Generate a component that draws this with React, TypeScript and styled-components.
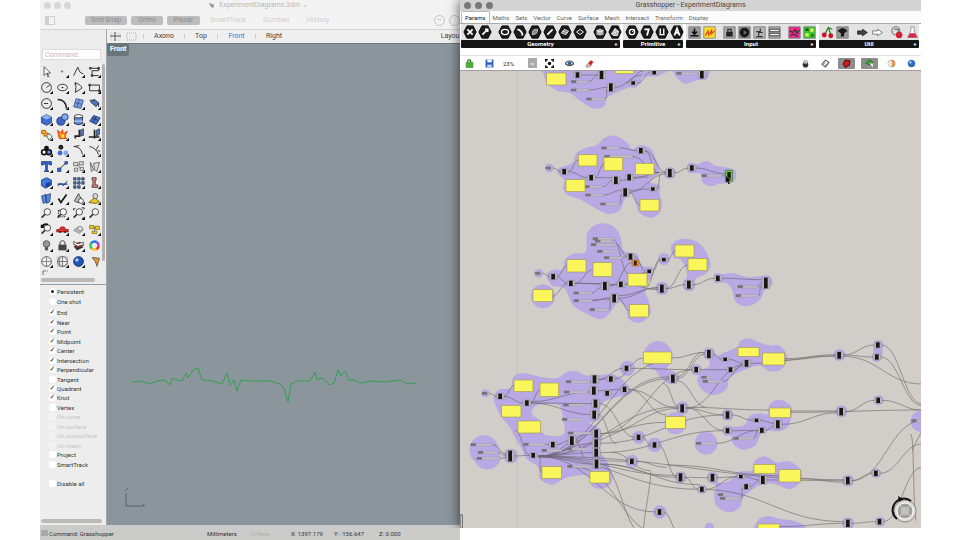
import React from "react";
import styled, { createGlobalStyle, css } from "styled-components";

const GlobalStyle = createGlobalStyle`
  *, *::before, *::after { box-sizing: border-box; }
  body { margin: 0; background: #fff; font-family: Roboto, "Liberation Sans", sans-serif; font-size: 7px; line-height: 9px; color: #333; }
  button, input, select { font: inherit; color: inherit; margin: 0; padding: 0; border: 0; background: none; }
  svg { display: block; }
`;

/* ---------- shell ---------- */

const Desktop = styled.main`
  display: grid;
  grid-template-columns: minmax(0, 420fr) minmax(0, 461fr);
  height: 100vh;
  padding: 0 39px 0 40px;
  overflow: hidden;
`;

const RhinoWindow = styled.section`
  display: flex;
  flex-direction: column;
  min-width: 0;
  min-height: 0;
  background: #f3f3f3;
`;

const GrasshopperWindow = styled.section`
  display: flex;
  flex-direction: column;
  min-width: 0;
  min-height: 0;
  margin-bottom: 12px;
  z-index: 1;
  background: #fff;
  box-shadow: -2px 0 10px rgba(0, 0, 0, 0.5);
  clip-path: inset(0 0 0 -20px);
`;

const TitleBar = styled.header<{ $active?: boolean }>`
  display: grid;
  grid-template-columns: ${(p) => (p.$active ? 40 : 56)}px 1fr 40px;
  align-items: center;
  height: 11px;
  flex: none;
  background: ${(p) => (p.$active ? "#d3d3d3" : "#f3f3f3")};
  color: ${(p) => (p.$active ? "#444" : "#b8b8b8")};
`;

const Lights = styled.div<{ $active?: boolean }>`
  display: flex;
  gap: ${(p) => (p.$active ? 4 : 3)}px;
  padding-left: 4px;
  i {
    width: 7px;
    height: 7px;
    border-radius: 50%;
    background: ${(p) => (p.$active ? "#777" : "#d6d6d6")};
  }
`;

const WindowTitle = styled.h1`
  display: flex;
  justify-content: center;
  align-items: center;
  gap: 4px;
  margin: 0;
  font-size: 7px;
  line-height: 9px;
  font-weight: 400;
  white-space: nowrap;
`;

/* ---------- modelling window ---------- */

const SnapBar = styled.div`
  display: flex;
  align-items: center;
  gap: 4px;
  height: 18px;
  flex: none;
  padding-left: 5px;
  overflow: hidden;
`;

const PanelToggle = styled.button`
  width: 10px;
  height: 9px;
  margin-right: 26px;
  border: 1px solid #d0d0d0;
  border-left-width: 4px;
`;

const SnapButton = styled.button<{ $on?: boolean; $width: number }>`
  width: ${(p) => p.$width}px;
  height: 9px;
  flex: none;
  border-radius: 2px;
  background: ${(p) => (p.$on ? "#bdbdbd" : "transparent")};
  color: ${(p) => (p.$on ? "#8c8c8c" : "#cfcfcf")};
`;

const RoundButton = styled.button`
  width: 11px;
  height: 11px;
  flex: none;
  border: 1px solid #c4c4c4;
  border-radius: 50%;
  color: #aaa;
  line-height: 7px;
`;

const Spacer = styled.span`
  flex: 1;
`;

const WorkArea = styled.div`
  display: grid;
  grid-template-columns: 67px minmax(0, 1fr);
  flex: 1;
  min-height: 0;
`;

const Sidebar = styled.aside`
  display: flex;
  flex-direction: column;
  min-height: 0;
  background: #ececec;
  border-right: 1px solid #a4a4a4;
  border-top: 1px solid #d4d4d4;
`;

const CommandInput = styled.input`
  height: 11px;
  flex: none;
  margin: 19px 5px 0 2px;
  padding: 0 2px;
  border: 1px solid #dcdcdc;
  background: #fff;
  &::placeholder { color: #bbb; opacity: 1; }
`;

const ToolArea = styled.div`
  display: grid;
  grid-template-columns: 1fr 4px;
  height: 205px;
  flex: none;
  margin-top: 4px;
`;

const ToolGrid = styled.div`
  display: grid;
  grid-template-columns: repeat(4, 1fr);
  grid-template-rows: repeat(13, 1fr);
  margin-left: -2px;
`;

const ToolButton = styled.button`
  display: grid;
  place-items: center;
`;

const VerticalThumb = styled.div`
  width: 3px;
  margin-bottom: 8px;
  border-radius: 2px;
  background: #b4b4b4;
`;

const HorizontalThumb = styled.div<{ $inset: number }>`
  height: 4px;
  flex: none;
  margin: 0 ${(p) => p.$inset}px 2px 1px;
  border-radius: 2px;
  background: #bcb8b6;
`;

const PanelFoot = styled.div`
  height: 9px;
  flex: none;
  padding-left: 2px;
  color: #777;
`;

const Options = styled.form`
  display: flex;
  flex-direction: column;
  flex: 1;
  min-height: 0;
  padding-top: 2px;
  border-top: 1px solid #8d9da8;
  background: #ededed;
  font-size: 6px;
`;

const OptionGroup = styled.div<{ $height: number; $gap: number }>`
  display: grid;
  grid-auto-rows: 1fr;
  flex: none;
  height: ${(p) => p.$height}px;
  margin-bottom: ${(p) => p.$gap}px;
  padding-left: 9px;
`;

const Option = styled.label<{ $off?: boolean }>`
  display: flex;
  align-items: center;
  gap: 1px;
  color: ${(p) => (p.$off ? "#c4c4c4" : "#333")};
  white-space: nowrap;
  input {
    display: grid;
    place-items: center;
    appearance: none;
    flex: none;
    width: 7px;
    height: 7px;
    border-radius: 2px;
    background: ${(p) => (p.$off ? "#f2f2f2" : "#fff")};
  }
  input[type="radio"] { border-radius: 50%; }
  input[type="radio"]:checked::after { content: ""; width: 3px; height: 3px; border-radius: 50%; background: #222; }
  input[type="checkbox"]:checked::after { content: "✓"; font: 700 7px/7px "DejaVu Sans", sans-serif; color: #222; }
`;

const ViewColumn = styled.div`
  display: flex;
  flex-direction: column;
  min-width: 0;
`;

const ViewTabs = styled.nav`
  display: flex;
  align-items: center;
  height: 14px;
  flex: none;
  padding-left: 3px;
  overflow: hidden;
  background: #efefef;
  border-top: 1px solid #d4d4d4;
`;

const ViewTab = styled.button<{ $width: number; $active?: boolean }>`
  width: ${(p) => p.$width}px;
  flex: none;
  color: ${(p) => (p.$active ? "#2c7be0" : "#444")};
  white-space: nowrap;
`;

const TabRule = styled.i`
  width: 1px;
  height: 5px;
  background: #ccc;
`;

const Viewport = styled.div`
  position: relative;
  flex: 1;
  min-height: 0;
  overflow: hidden;
  background: #8b969c;
  border-top: 1px solid #6d7a7a;
`;

const ViewLabel = styled.span`
  position: absolute;
  left: 0;
  top: 0;
  padding: 1px 3px 2px;
  border-radius: 0 0 3px 0;
  background: #6a7579;
  color: #fff;
  font-weight: 700;
`;

const StatusBar = styled.footer`
  display: flex;
  align-items: center;
  height: 15px;
  flex: none;
  padding: 1px 0 0 1px;
  background: #cbcbc9;
  font-size: 6px;
  white-space: nowrap;
  overflow: hidden;
`;

const StatusMark = styled.i`
  width: 7px;
  height: 6px;
  margin-right: 1px;
  background: #aaa;
`;

const StatusItem = styled.span<{ $width: number; $dim?: boolean }>`
  width: ${(p) => p.$width}px;
  flex: none;
  color: ${(p) => (p.$dim ? "#b0b0b0" : "#333")};
`;

type Drawing = React.ReactNode;
const line = { fill: "none", stroke: "#333", strokeWidth: 1.2 };
const lens = (
  <>
    <circle cx="9" cy="6" r="4" fill="#f4f4f4" stroke="#333" />
    <path d="M6 9 2 13" stroke="#333" strokeWidth="2" />
  </>
);
const cube = (
  <>
    <path d="M2 5 8 2l6 3v7l-6 3-6-3z" fill="#3c6fd6" stroke="#1c356e" />
    <path d="M2 5 8 2l6 3-6 3z" fill="#8db4f4" />
  </>
);

const tools: [string, Drawing][] = [
  ["Select", <path d="M5 2v11l3-3 2 5 1-1-2-4h4z" fill="#fff" stroke="#444" />],
  ["Point", <path d="M6 8h3M7.500 6.500v3" {...line} stroke="#777" />],
  ["Polyline", <path d="M2 13 7 3l3 6 4 2M7 3l1 0" {...line} />],
  ["Control curve", <path d="M3 4h10v3H5v6h8M2 3h2v2H2zM12 3h2v2h-2zM4 12h2v2H4z" {...line} />],
  ["Circle", <><circle cx="8" cy="8" r="6" {...line} /><path d="M8 8l4-3" {...line} /></>],
  ["Ellipse", <><ellipse cx="8" cy="8" rx="6" ry="4" {...line} /><circle cx="8" cy="8" r="1" /></>],
  ["Arc", <path d="M4 2q9 4 8 7L4 14l1-6zM4 2v3" {...line} />],
  ["Rectangle", <path d="M2 5h12v7H2zM1 4h2v2H1zM13 11h2v2h-2z" {...line} />],
  ["Polygon", <><circle cx="8" cy="8" r="6" {...line} /><path d="M5 8h5" {...line} /></>],
  ["Fillet", <path d="M2 3q10 0 11 11" fill="none" stroke="#222" strokeWidth="2" />],
  ["Surface", <path d="M5 2 14 4 11 14 2 12zM4 7l8 2M9 3 6 13" fill="#7e9ee0" stroke="#354d91" />],
  ["Sweep", <><path d="M3 6 8 3l5 4-3 5z" fill="#4c73ca" stroke="#333" /><path d="M2 4h6M13 7v5" {...line} /></>],
  ["Box", cube],
  ["Sphere", <><circle cx="6" cy="10" r="5" fill="#3a66c8" stroke="#1c356e" /><circle cx="11" cy="5" r="4" fill="#86aaf0" stroke="#1c356e" /></>],
  ["Loft", <><path d="M3 4v9q5 3 10 0V4z" fill="#5a8ae2" stroke="#222" /><ellipse cx="8" cy="4" rx="5" ry="2" fill="#fff" stroke="#222" /><path d="M1 10h14" stroke="#eee" /></>],
  ["Patch", <path d="M2 10 7 3l8 3-5 8zM5 6l7 3M10 4 6 12" fill="#426ec8" stroke="#23315e" />],
  ["Join", <><path d="M2 3h5v3h3v4H5V7H2z" fill="#f9a62e" stroke="#a85d00" /><path d="m8 9 4-2 3 4-4 4z" fill="#eee" stroke="#555" /></>],
  ["Explode", <><path d="m2 3 4 3 2-4 1 5 5-3-3 6 2 3H4z" fill="#ff8a16" stroke="#d22c00" /><path d="M7 8h3v4H7z" fill="#ffe64c" /></>],
  ["Trim", <><path d="M9 2v8H4v3" fill="none" stroke="#222" strokeWidth="2" /><path d="m10 3 4-2v8l-4 1z" fill="#567ac0" stroke="#333" /></>],
  ["Split", <><path d="M1 11h13M8 2v11" fill="none" stroke="#222" strokeWidth="2" /><path d="m10 3 4-2v7l-4 2z" fill="#567ac0" stroke="#333" /></>],
  ["Group", <><circle cx="8" cy="5" r="3" fill="#111" /><circle cx="5" cy="10" r="3" fill="#fff" stroke="#111" strokeWidth="2" /><circle cx="11" cy="10" r="3" fill="#6b94e8" stroke="#111" strokeWidth="2" /></>],
  ["Ungroup", <><circle cx="6" cy="4" r="3" fill="#222" /><circle cx="5" cy="11" r="3" fill="#3f6cd1" /><circle cx="12" cy="11" r="3" fill="#84a7ef" /></>],
  ["Edit points", <path d="M2 3q9 0 11 10M3 3l6-1" {...line} />],
  ["Rebuild", <path d="M2 3q8 2 11 10M13 2l-3 5M12 8l3 1" {...line} />],
  ["Text", <path d="M2 2h12v4h-2l-1-1H9v8l2 1H5l2-1V5H5L4 6H2z" fill="#3569d8" stroke="#14306f" />],
  ["Move", <><path d="M4 11 12 4" {...line} /><path d="M2 10h4v4H2zM11 2h3v3h-3z" fill="#3e6fd9" stroke="#1c356e" /></>],
  ["Array", <path d="M2 3h5v4H2zM9 2h5v4H9zM3 10h4v4H3zM10 9h4v4h-4zM7 5l3 5" fill="#ddd" stroke="#666" />],
  ["Scale", <path d="m3 3 4 9-3 2zM7 4l7-1-3 11-3-2z" fill="#ddd" stroke="#555" />],
  ["Solid edit", <><path d="M2 5 8 2l6 3v6l-7 4-5-3z" fill="#3f78e0" stroke="#1c356e" /><path d="M7 9 13 7v4l-6 3z" fill="#1c3f90" /></>],
  ["Dimension", <><path d="M2 10h12" stroke="#3565c0" strokeWidth="2" /><path d="m2 12 4-3 3 3 5-6" {...line} /></>],
  ["Grid array", <path d="M2 2h3v3H2zM7 2h3v3H7zM12 2h3v3h-3zM2 7h3v3H2zM7 7h3v3H7zM12 7h3v3h-3zM2 12h3v3H2zM7 12h3v3H7z" fill="#5471af" stroke="#34425f" />],
  ["Align", <path d="M5 2h5v3H9v6h3v3H5v-3h1V5H5z" fill="#cf8080" stroke="#603838" />],
  ["Copy", <path d="m2 5 5-2 1 9-4 2zM7 4l6-2-1 10-4 2z" fill="#5b88df" stroke="#263e7d" />],
  ["Check", <path d="m3 8 3 5 7-10" fill="none" stroke="#111" strokeWidth="2" />],
  ["Boolean", <><path d="M3 11 8 2l5 9q-5 4-10 0z" fill="#bbb" stroke="#333" /><circle cx="11" cy="11" r="3" fill="#fff" stroke="#333" /></>],
  ["Analyze", <><path d="m1 13 7-6 6 5-4 2z" fill="#f0c52c" stroke="#6a5600" /><circle cx="9" cy="5" r="3" fill="#ddd" stroke="#555" /></>],
  ["Zoom dynamic", lens],
  ["Zoom window", <><path d="M3 4h8v8H3z" {...line} strokeDasharray="2 1" />{lens}</>],
  ["Zoom extents", <>{lens}<path d="M2 4V2h2M12 1h3v2M15 12v2h-3" {...line} /></>],
  ["Zoom selected", lens],
  ["Undo view", <>{lens}<path d="M2 5q3-5 8-3M2 2v3h3" stroke="#111" fill="none" strokeWidth="2" /></>],
  ["Car", <><path d="M1 8h3l2-3h4l2 3h3v3H1z" fill="#df2d2d" stroke="#8c1111" /><path d="M4 11h2M10 11h2" stroke="#111" strokeWidth="2" /></>],
  ["Display", <><path d="m2 9 5-4 7 3-5 5z" fill="#bbb" stroke="#888" /><circle cx="10" cy="7" r="3" fill="#ddd" stroke="#777" /></>],
  ["Lights", <><path d="M2 3h5v4H2zM9 4h5v4H9zM5 10h6v3H5z" fill="#f1c624" stroke="#98780e" /><path d="M7 5h3M8 5v6" stroke="#777" /></>],
  ["Lamp", <><circle cx="8" cy="6" r="4" fill="#999" stroke="#444" /><path d="M6 10h4v4H6z" fill="#555" /></>],
  ["Lock", <><path d="M5 8V4q3-4 6 0v4" {...line} /><path d="M3 7h10v7H3z" fill="#444" /></>],
  ["Layers", <><path d="m2 9 4 5 8-4-3-3z" fill="#333" /><path d="m2 6 4 4 8-2-4-4z" fill="#ef6c2c" stroke="#971e11" /><path d="m2 3 5 3 7-2v3L7 9 2 6z" fill="#fff" stroke="#444" /></>],
  ["Colors", <><circle cx="8" cy="8" r="5" fill="none" stroke="#e33" strokeWidth="3" strokeDasharray="6 26" /><circle cx="8" cy="8" r="5" fill="none" stroke="#a3e" strokeWidth="3" strokeDasharray="5 27" strokeDashoffset="-26" /><circle cx="8" cy="8" r="5" fill="none" stroke="#27e" strokeWidth="3" strokeDasharray="8 24" strokeDashoffset="-18" /><circle cx="8" cy="8" r="5" fill="none" stroke="#2c5" strokeWidth="3" strokeDasharray="7 25" strokeDashoffset="-11" /><circle cx="8" cy="8" r="5" fill="none" stroke="#fb2" strokeWidth="3" strokeDasharray="6 26" strokeDashoffset="-5" /></>],
  ["Wireframe", <><circle cx="8" cy="8" r="6" fill="#eee" stroke="#444" /><path d="M2 8h12M8 2v12" stroke="#777" /></>],
  ["Shaded", <><path d="M1 1h14v14H1z" fill="#d0d0d0" /><circle cx="8" cy="8" r="6" fill="#eee" stroke="#444" /><path d="M2 8h12M8 2v12M5 3q-2 5 0 10" stroke="#666" fill="none" /></>],
  ["Rendered", <><circle cx="8" cy="8" r="6" fill="#2055b8" stroke="#0a1d51" /><circle cx="6" cy="6" r="2" fill="#b5d0ff" /></>],
  ["Material", <path d="m5 3 9 1-3 10-2-6z" fill="#e89a2c" stroke="#4d4d4d" />],
];

const noArrow = new Set(["Select", "Colors", "Zoom dynamic", "Zoom selected", "Material"]);

const ToolIcon = ({ name, children }: { name: string; children: Drawing }) => (
  <svg width="13" height="13" viewBox="0 0 16 16" aria-hidden="true">
    {children}
    {!noArrow.has(name) && <path d="M16 12v4h-4z" fill="#111" />}
  </svg>
);

const snaps: [string, "on" | "open" | "off"][] = [
  ["End", "on"], ["Near", "on"], ["Point", "on"], ["Midpoint", "on"], ["Center", "on"],
  ["Intersection", "on"], ["Perpendicular", "on"], ["Tangent", "open"], ["Quadrant", "on"],
  ["Knot", "on"], ["Vertex", "open"], ["On curve", "off"], ["On surface", "off"],
  ["On polysurface", "off"], ["On mesh", "off"], ["Project", "open"], ["SmartTrack", "open"],
];

const curvePoints =
  "25,338 33,337 43,340 50,337 58,336 63,341 65,334 70,336 75,337 79,329 81,334 86,326 91,324 95,336 105,337 115,340 120,329 123,342 127,336 130,347 134,336 145,337 155,337 163,337 173,340 177,344 181,358 184,340 190,337 203,337 208,328 210,336 215,334 223,341 227,339 231,326 234,332 238,327 242,336 247,336 253,339 265,337 278,338 286,337 293,336 300,340 309,339";

const Rhino = () => (
  <RhinoWindow>
    <TitleBar>
      <Lights><i /><i /><i /></Lights>
      <WindowTitle>
        <svg width="7" height="7" viewBox="0 0 8 8"><path d="M1 1l3 1 3 1-1 4-3-2z" fill="#999" /></svg>
        ExperimentDiagrams.3dm ⌄
      </WindowTitle>
    </TitleBar>
    <SnapBar>
      <PanelToggle aria-label="Toggle panel" />
      <SnapButton $on $width={42}>Grid Snap</SnapButton>
      <SnapButton $on $width={32}>Ortho</SnapButton>
      <SnapButton $on $width={33}>Planar</SnapButton>
      <SnapButton $width={48}>SmartTrack</SnapButton>
      <SnapButton $width={40}>Gumball</SnapButton>
      <SnapButton $width={36}>History</SnapButton>
      <Spacer />
      <RoundButton aria-label="Remove">–</RoundButton>
      <RoundButton aria-label="Settings" />
    </SnapBar>
    <WorkArea>
      <Sidebar>
        <CommandInput aria-label="Command" placeholder="Command:" />
        <ToolArea>
          <ToolGrid>
            {tools.map(([name, art]) => (
              <ToolButton key={name} aria-label={name}><ToolIcon name={name}>{art}</ToolIcon></ToolButton>
            ))}
          </ToolGrid>
          <VerticalThumb />
        </ToolArea>
        <PanelFoot>
          <svg width="8" height="8" viewBox="0 0 8 8"><path d="M1 6V2h3M5 2h1" fill="none" stroke="#777" /></svg>
        </PanelFoot>
        <HorizontalThumb $inset={11} />
        <Options>
          <OptionGroup role="radiogroup" aria-label="Snap duration" $height={19} $gap={2}>
            <Option><input type="radio" name="mode" defaultChecked />Persistent</Option>
            <Option><input type="radio" name="mode" />One shot</Option>
          </OptionGroup>
          <OptionGroup role="group" aria-label="Object snaps" $height={161} $gap={9}>
            {snaps.map(([name, state]) => (
              <Option key={name} $off={state === "off"}>
                <input type="checkbox" defaultChecked={state === "on"} disabled={state === "off"} />
                {name}
              </Option>
            ))}
          </OptionGroup>
          <OptionGroup $height={10} $gap={0}>
            <Option><input type="checkbox" />Disable all</Option>
          </OptionGroup>
          <Spacer />
          <HorizontalThumb $inset={4} />
        </Options>
      </Sidebar>
      <ViewColumn>
        <ViewTabs>
          <ViewTab $width={14} aria-label="Four views">
            <svg width="11" height="9" viewBox="0 0 11 9"><path d="M1 1h9v7H1z" fill="none" stroke="#ccc" strokeDasharray="2 1" /><path d="M5 0v9M0 4h11" stroke="#555" /></svg>
          </ViewTab>
          <ViewTab $width={19} aria-label="Single view">
            <svg width="14" height="9" viewBox="0 0 14 9"><path d="M3 1h9v7H3z" fill="none" stroke="#8fb5ea" strokeDasharray="1 1" /></svg>
          </ViewTab>
          <TabRule />
          <ViewTab $width={40}>Axono</ViewTab><TabRule />
          <ViewTab $width={32}>Top</ViewTab><TabRule />
          <ViewTab $width={37} $active>Front</ViewTab><TabRule />
          <ViewTab $width={36}>Right</ViewTab>
          <Spacer />
          <ViewTab $width={20}>Layou</ViewTab>
        </ViewTabs>
        <Viewport>
          <ViewLabel>Front</ViewLabel>
          <svg width="100%" height="100%">
            <polyline points={curvePoints} fill="none" stroke="#329f50" />
            <path d="M19 462h18M19 462v-13M18 447l3-3M36 460l2 2" fill="none" stroke="#555f76" />
          </svg>
        </Viewport>
      </ViewColumn>
    </WorkArea>
    <StatusBar>
      <StatusMark />
      <StatusItem $width={158}>Command: Grasshopper</StatusItem>
      <StatusItem $width={43}>Millimeters</StatusItem>
      <StatusItem $width={41} $dim>CPlane</StatusItem>
      <StatusItem $width={43}>X: 1397.179</StatusItem>
      <StatusItem $width={45}>Y: -156.647</StatusItem>
      <StatusItem $width={40}>Z: 0.000</StatusItem>
    </StatusBar>
  </RhinoWindow>
);

/* ---------- graph editor window ---------- */

const Menu = styled.nav`
  display: flex;
  align-items: center;
  height: 12px;
  flex: none;
  padding-left: 1px;
  background: #fbfbfb;
  font-size: 6px;
`;

const MenuTab = styled.button<{ $active?: boolean }>`
  height: 12px;
  padding: 0 3px;
  color: #666;
  ${(p) =>
    p.$active &&
    css`
      border: 1px solid #bbb;
      border-bottom: 0;
      border-radius: 2px 2px 0 0;
      background: #fff;
      color: #111;
    `}
`;

const Ribbon = styled.div`
  display: flex;
  gap: 3px;
  height: 25px;
  flex: none;
  padding: 0 2px 0 1px;
  border-top: 1px solid #aaa;
  background: #fff;
`;

const RibbonGroup = styled.section<{ $grow: number }>`
  display: flex;
  flex-direction: column;
  flex: ${(p) => p.$grow} 1 0;
  min-width: 0;
  background: #e3e3e3;
`;

const RibbonIcons = styled.div`
  display: flex;
  align-items: center;
  flex: 1;
  padding-left: 1px;
`;

const RibbonButton = styled.button<{ $apart?: boolean }>`
  display: grid;
  place-items: center;
  width: 15px;
  height: 15px;
  flex: none;
  margin-left: ${(p) => (p.$apart ? 5 : 0)}px;
`;

const RibbonTitle = styled.h2`
  display: grid;
  grid-template-columns: 8px 1fr 8px;
  height: 8px;
  margin: 0;
  border-radius: 1px;
  background: #151515;
  color: #fff;
  font-size: 6px;
  line-height: 8px;
  font-weight: 700;
  text-align: center;
`;

const CanvasBar = styled.div`
  display: flex;
  align-items: center;
  gap: 8px;
  height: 15px;
  flex: none;
  margin-top: 7px;
  padding: 0 4px 0 3px;
  border-top: 1px solid #e2e2e2;
  background: #fff;
`;

const BarButton = styled.button<{ $pressed?: boolean }>`
  display: grid;
  place-items: center;
  width: 12px;
  height: 11px;
  flex: none;
  border-radius: 1px;
  ${(p) =>
    p.$pressed &&
    css`
      width: 17px;
      margin: 0 -1px;
      background: #8d8d8d;
    `}
`;

const ZoomField = styled.label`
  position: relative;
  display: flex;
  margin-right: -2px;
  svg { position: absolute; right: 2px; top: 4px; pointer-events: none; }
`;

const ZoomSelect = styled.select`
  width: 34px;
  height: 11px;
  appearance: none;
  background: linear-gradient(#aaa, #aaa) right / 9px 10px no-repeat;
  font-size: 6px;
`;

const Canvas = styled.div`
  position: relative;
  flex: 1;
  min-height: 0;
  overflow: hidden;
  background: #d1cdc8;
  border-top: 1px solid #a39f9d;
`;

const Compass = styled.svg`
  position: absolute;
  right: 3px;
  bottom: 2px;
`;

const hexGlyphs: Record<string, Drawing> = {
  point: <path d="m5 5 6 6M11 5l-6 6" stroke="#fff" strokeWidth="2" />,
  vector: <path d="m5 11 5-5M8 5h3v3" stroke="#fff" fill="none" strokeWidth="2" />,
  circle: <ellipse cx="8" cy="8" rx="4" ry="3" fill="none" stroke="#fff" strokeWidth="1.500" />,
  arc: <path d="M5 5q5 1 6 7" fill="none" stroke="#fff" strokeWidth="2" />,
  curve: <path d="M5 11Q4 4 11 5q0 6-6 6z" fill="#888" stroke="#ccc" />,
  line: <path d="m5 11 6-6" stroke="#fff" strokeWidth="2" />,
  plane: <path d="m4 9 3-4 5 2-3 4zM6 7l4 2" fill="#777" stroke="#fff" />,
  rect: <path d="m4 8 4-3 4 3-4 3z" fill="#333" stroke="#fff" />,
  box: <><path d="m4 6 4-2 4 2v5l-4 1-4-1z" fill="#bbb" /><path d="m4 6 4 2 4-2" stroke="#fff" fill="none" /></>,
  mesh: <path d="M4 10 8 4l4 3-1 5H6zM8 4v8M4 10l8-3" fill="#aaa" stroke="#eee" />,
  bool: <><circle cx="8" cy="8" r="3" fill="none" stroke="#fff" strokeWidth="1.500" /><path d="m8 8 3-3" stroke="#fff" /></>,
  integer: <path d="M5 5h5l-2 7" fill="none" stroke="#fff" strokeWidth="2" />,
  number: <path d="M6 4v7M10 4v7M5 11h6" fill="none" stroke="#fff" strokeWidth="1.500" />,
  string: <path d="m5 12 3-8 3 8M6 9h4" fill="none" stroke="#fff" strokeWidth="2" />,
};

const Hex = ({ glyph }: { glyph: string }) => (
  <svg width="14" height="14" viewBox="0 0 16 16">
    <path d="M4.500 1h7L15 8l-3.500 7h-7L1 8z" fill="#1b1b1b" stroke="#000" strokeLinejoin="round" />
    {hexGlyphs[glyph]}
  </svg>
);

const Tile = ({ fill, children }: { fill: string; children: Drawing }) => (
  <svg width="13" height="13" viewBox="0 0 16 16">
    <path d="M1 1h14v14H1z" fill={fill} stroke="#777" />
    {children}
  </svg>
);

const Glyph = ({ children, size = 13 }: { children: Drawing; size?: number }) => (
  <svg width={size} height={size} viewBox="0 0 16 16">{children}</svg>
);

type Item = { name: string; art: Drawing; apart?: boolean };
const hex = (name: string, apart = false): Item => ({ name, apart, art: <Hex glyph={name} /> });

const ribbon: { title: string; grow: number; items: Item[] }[] = [
  { title: "Geometry", grow: 159, items: [hex("point"), hex("vector"), hex("circle", true), hex("arc"), hex("curve"), hex("line"), hex("plane"), hex("rect"), hex("box", true), hex("mesh")] },
  { title: "Primitive", grow: 60, items: [hex("bool"), hex("integer"), hex("number"), hex("string")] },
  {
    title: "Input", grow: 130, items: [
      { name: "Slider", art: <Tile fill="#9a9a9a"><path d="M3 12h10M8 3v6M5 7l3 3 3-3" stroke="#111" strokeWidth="2" fill="none" /></Tile> },
      { name: "Panel", art: <Tile fill="#ffe02c"><path d="m3 12 3-6 1 5 4-7-1 6 4-4" stroke="#e04b12" strokeWidth="1.500" fill="none" /></Tile> },
      { name: "Toggle", apart: true, art: <Tile fill="#aaa"><path d="M4 7h8v6H4z" fill="#222" /><path d="M6 7V4h4v3" fill="none" stroke="#222" strokeWidth="1.500" /></Tile> },
      { name: "Knob", art: <Tile fill="#8d8d8d"><circle cx="8" cy="8" r="6" fill="#181818" /><path d="m7 5 4 3-4 3z" fill="#666" /></Tile> },
      { name: "Path", art: <Tile fill="#b5b5b5"><path d="M9 3v4H4M12 8H7v4M4 13h8" fill="none" stroke="#333" strokeWidth="1.500" /></Tile> },
      { name: "List", art: <Tile fill="#a5a5a5"><path d="M2 4h12v3H2zM2 9h12v3H2z" fill="#eee" stroke="#333" /></Tile> },
      { name: "Gradient", apart: true, art: <Tile fill="#f02a8c"><path d="m2 6 4 2 3-4 2 5 3-4M3 12l4-2 5 3" stroke="#333" fill="none" strokeWidth="1.500" /></Tile> },
      { name: "Mapper", art: <Tile fill="#35c92d"><path d="M3 9h4v4H3zM9 3h4v4H9z" fill="#e8f35a" /><path d="M3 3h4v3H3zM10 10h3v3h-3z" fill="#155e15" /></Tile> },
    ],
  },
  {
    title: "Util", grow: 100, items: [
      { name: "Cherry", art: <Glyph><path d="M5 10 9 2l3 8M9 2l5 2" fill="none" stroke="#24821f" strokeWidth="1.500" /><circle cx="4" cy="11" r="3" fill="#c81526" /><circle cx="12" cy="12" r="3" fill="#c81526" /></Glyph> },
      { name: "Tree", art: <Tile fill="#999"><path d="M2 6q6-7 12 0l-4 3v4H6V9z" fill="#181818" /></Tile> },
      { name: "Forward", apart: true, art: <Glyph><path d="M2 6h6V4l6 4-6 4v-2H2z" fill="#444" stroke="#222" /></Glyph> },
      { name: "Next", art: <Glyph><path d="M2 6h6V4l6 4-6 4v-2H2z" fill="#fff" stroke="#666" /></Glyph> },
      { name: "Cluster", apart: true, art: <Glyph><circle cx="6" cy="6" r="5" fill="#ddd" stroke="#555" /><circle cx="10" cy="11" r="4" fill="#d21e36" /><path d="M4 4h5v4" stroke="#444" fill="none" /></Glyph> },
      { name: "Flask", art: <Glyph><path d="M6 1h4v5l4 8H2l4-8z" fill="#fff" stroke="#888" /><path d="M5 9h6l3 5H2z" fill="#d82345" /></Glyph> },
    ],
  },
];

/* Graph geometry is stored at three units per screen pixel. */
type P = [number, number];
type N = [number, number, number];
type R = [number, number, number, number];
type Cluster = { x: number; y: number; blobs: P[][]; discs: N[]; notes: R[]; nodes: N[]; sliders: N[]; wires: R[] };

const smooth = (pts: P[]) => {
  const n = pts.length;
  const at = (i: number) => pts[(i + n) % n];
  let d = `M${pts[0].join(" ")}`;
  for (let i = 0; i < n; i++) {
    const [a, b, c, e] = [at(i - 1), at(i), at(i + 1), at(i + 2)];
    d += `C${b[0] + (c[0] - a[0]) / 6} ${b[1] + (c[1] - a[1]) / 6} ${c[0] - (e[0] - b[0]) / 6} ${c[1] - (e[1] - b[1]) / 6} ${c[0]} ${c[1]}`;
  }
  return d + "Z";
};

const wire = ([x1, y1, x2, y2]: R) => {
  const k = Math.max(Math.abs(x2 - x1) * 0.45, 12);
  return `M${x1} ${y1}C${x1 + k} ${y1} ${x2 - k} ${y2} ${x2} ${y2}`;
};

const clusters: Cluster[] = [
  {
    x: 165, y: -12,
    blobs: [
      [[85, -10], [86, 20], [97, 50], [130, 72], [165, 78], [200, 105], [240, 125], [268, 116], [276, 92], [310, 74], [345, 60], [375, 52], [385, 30], [435, 25], [450, -10]],
      [[474, -10], [480, 24], [510, 50], [545, 40], [575, 36], [584, 12], [575, -10]],
      [[130, 305], [172, 288], [184, 258], [215, 242], [245, 235], [268, 213], [300, 206], [335, 225], [352, 246], [378, 234], [408, 246], [422, 275], [434, 312], [418, 330], [405, 345], [434, 355], [434, 380], [441, 412], [430, 442], [403, 452], [372, 436], [364, 410], [352, 382], [332, 392], [314, 430], [282, 441], [250, 428], [200, 400], [160, 385], [145, 365], [148, 340], [131, 322]],
      [[520, 290], [545, 292], [575, 282], [602, 296], [640, 302], [662, 312], [660, 338], [640, 348], [612, 350], [586, 358], [562, 345], [556, 320], [520, 316]],
    ],
    discs: [[465, 318, 18], [103, 303, 13], [531, 303, 16], [355, 48, 15]],
    notes: [[95, 18, 58, 36], [300, 0, 56, 20], [190, 263, 56, 34], [267, 272, 56, 39], [361, 289, 56, 34], [153, 338, 57, 36], [375, 397, 57, 35]],
    nodes: [[188, 24, 14], [260, 24, 22], [288, 61, 22], [355, 48, 8], [418, 14, 14], [561, 20, 26], [148, 314, 14], [229, 332, 14], [303, 340, 20], [343, 331, 16], [331, 376, 22], [378, 251, 14], [414, 366, 8], [465, 318, 22], [531, 303, 14]],
    sliders: [[168, 44, 52], [168, 69, 54], [214, 96, 56], [484, 19, 54], [259, 243, 55], [268, 268, 85], [208, 359, 55], [211, 384, 55], [256, 411, 56], [560, 326, 60], [92, 303, 22]],
    wires: [[222, 69, 278, 61], [220, 44, 250, 24], [300, 61, 380, 24], [270, 96, 280, 61], [368, 48, 410, 14], [200, 24, 250, 24], [330, 48, 385, 12], [115, 303, 138, 314], [160, 314, 218, 332], [160, 314, 190, 280], [240, 332, 293, 332], [314, 243, 368, 251], [390, 251, 430, 318], [352, 268, 430, 318], [390, 251, 455, 318], [265, 359, 292, 340], [265, 384, 320, 370], [312, 411, 322, 380], [240, 332, 267, 290], [354, 331, 455, 315], [342, 376, 455, 320], [342, 370, 404, 366], [424, 366, 440, 320], [342, 376, 375, 414], [314, 340, 400, 330], [478, 318, 520, 303], [542, 303, 630, 320], [620, 326, 632, 326]],
  },
  {
    x: 165, y: 444,
    blobs: [
      [[95, 168], [115, 152], [142, 152], [150, 122], [175, 104], [212, 98], [216, 45], [236, 20], [266, 13], [300, 26], [318, 60], [326, 96], [365, 105], [382, 140], [412, 145], [416, 165], [398, 190], [390, 215], [402, 250], [406, 285], [375, 311], [342, 300], [332, 265], [308, 250], [282, 285], [255, 301], [215, 284], [175, 260], [158, 225], [145, 205], [112, 200]],
      [[468, 82], [490, 62], [530, 62], [562, 82], [586, 130], [575, 162], [545, 178], [530, 200], [513, 190], [516, 160], [500, 125], [476, 115]],
      [[598, 165], [620, 165], [655, 163], [700, 175], [760, 170], [772, 195], [750, 212], [732, 245], [695, 262], [662, 248], [650, 210], [630, 190], [600, 192]],
    ],
    discs: [[84, 232, 36], [71, 163, 13], [441, 208, 20], [522, 197, 20], [447, 120, 18]],
    notes: [[156, 122, 57, 37], [234, 131, 57, 41], [339, 164, 57, 37], [54, 212, 58, 36], [343, 257, 57, 37], [480, 78, 57, 36], [519, 119, 57, 36]],
    nodes: [[115, 173, 14], [168, 193, 14], [270, 201, 22], [318, 196, 14], [298, 238, 22], [347, 113, 16], [403, 157, 8], [447, 122, 8], [441, 209, 22], [522, 197, 22], [609, 178, 14], [753, 192, 30]],
    sliders: [[233, 59, 62], [228, 77, 76], [240, 66, 50], [247, 97, 54], [267, 116, 56], [176, 222, 54], [176, 245, 56], [224, 272, 56], [668, 203, 60], [662, 230, 66], [60, 163, 22]],
    wires: [[82, 163, 105, 173], [125, 173, 158, 193], [112, 232, 158, 193], [180, 193, 260, 194], [180, 193, 234, 152], [125, 173, 156, 140], [230, 222, 260, 205], [232, 245, 288, 236], [280, 272, 290, 240], [282, 201, 308, 196], [295, 62, 340, 164], [304, 77, 338, 113], [322, 116, 338, 113], [358, 113, 393, 157], [290, 201, 350, 131], [330, 196, 393, 160], [310, 238, 431, 206], [330, 196, 431, 212], [310, 238, 343, 275], [310, 230, 431, 206], [413, 157, 436, 122], [390, 208, 436, 122], [458, 122, 480, 97], [453, 209, 512, 197], [453, 209, 519, 138], [534, 197, 598, 178], [620, 178, 742, 182], [728, 203, 742, 190], [728, 230, 742, 200], [182, 245, 310, 240], [180, 193, 300, 196]],
  },
  {
    x: 0, y: 789,
    blobs: [
      [[103, 185], [120, 165], [152, 163], [160, 130], [190, 118], [240, 128], [290, 132], [320, 115], [350, 112], [380, 125], [430, 122], [470, 125], [500, 150], [514, 175], [490, 185], [450, 195], [422, 215], [418, 255], [388, 268], [420, 285], [425, 320], [418, 350], [440, 380], [458, 430], [440, 460], [400, 460], [382, 425], [330, 428], [300, 440], [275, 452], [240, 435], [235, 400], [200, 375], [185, 345], [165, 310], [150, 280], [125, 250], [105, 210]],
      [[594, 95], [640, 112], [658, 130], [645, 150], [620, 145], [590, 115]],
      [[735, 45], [760, 45], [770, 65], [795, 55], [830, 40], [842, 20], [870, 14], [920, 33], [960, 36], [982, 70], [965, 105], [930, 112], [900, 95], [860, 105], [810, 130], [800, 165], [765, 183], [730, 170], [712, 140], [725, 112], [750, 90]],
      [[870, 245], [900, 238], [922, 240], [930, 210], [960, 197], [992, 215], [995, 245], [982, 280], [955, 292], [925, 290], [902, 302], [885, 335], [850, 347], [820, 330], [812, 300], [800, 280], [850, 275]],
      [[750, 415], [775, 445], [810, 440], [840, 413], [875, 410], [885, 380], [915, 367], [950, 385], [990, 383], [1024, 410], [1020, 445], [990, 465], [950, 452], [915, 448], [880, 465], [850, 490], [840, 520], [805, 535], [770, 515], [762, 480], [768, 455], [745, 440]],
      [[892, 600], [893, 560], [925, 546], [960, 555], [1000, 560], [1032, 575], [1032, 600]],
      [[1243, 30], [1265, 30], [1265, 72], [1243, 72]],
    ],
    discs: [[72, 348, 44], [82, 366, 40], [152, 366, 22], [76, 178, 12], [502, 103, 23], [594, 66, 44], [667, 222, 20], [647, 268, 33], [536, 310, 20], [584, 333, 22], [516, 382, 20], [662, 430, 18], [599, 534, 20], [709, 107, 17], [747, 60, 18], [1138, 63, 18], [1255, 33, 15], [1251, 69, 15], [1144, 232, 18], [1256, 199, 15], [1384, 262, 32], [803, 243, 18], [803, 290, 16], [738, 328, 34], [1164, 440, 18], [1248, 418, 15], [1164, 568, 18], [1260, 563, 15], [758, 431, 18], [726, 466, 14], [748, 580, 14]],
    notes: [[162, 138, 57, 35], [240, 147, 56, 40], [125, 214, 58, 35], [174, 261, 68, 36], [246, 398, 58, 35], [390, 412, 58, 35], [550, 54, 85, 35], [617, 248, 59, 35], [834, 40, 63, 27], [908, 57, 66, 36], [928, 222, 63, 28], [882, 391, 64, 28], [957, 407, 64, 37], [894, 570, 64, 20]],
    nodes: [[121, 187, 14], [201, 207, 14], [404, 136, 22], [402, 170, 22], [407, 209, 22], [403, 242, 22], [409, 299, 22], [409, 328, 22], [409, 356, 22], [410, 390, 24], [336, 320, 24], [279, 332, 14], [220, 364, 12], [151, 366, 30], [453, 135, 14], [442, 178, 12], [500, 103, 13], [494, 166, 14], [639, 134, 22], [667, 223, 22], [536, 310, 14], [584, 333, 14], [516, 382, 14], [662, 430, 22], [599, 534, 15], [709, 107, 14], [747, 60, 22], [796, 76, 8], [812, 107, 12], [860, 88, 18], [1138, 64, 18], [1254, 33, 14], [1251, 69, 14], [803, 243, 20], [803, 290, 13], [890, 259, 8], [906, 289, 13], [954, 271, 22], [1144, 233, 20], [1255, 199, 14], [758, 431, 20], [726, 466, 13], [843, 428, 8], [909, 438, 22], [859, 458, 13], [1164, 440, 20], [1248, 418, 14], [1164, 568, 20], [1259, 563, 14]],
    sliders: [[318, 143, 70], [312, 174, 70], [310, 213, 65], [306, 256, 65], [324, 297, 70], [320, 345, 65], [322, 397, 70], [190, 331, 65], [245, 349, 60], [32, 332, 65], [54, 355, 60], [50, 373, 70], [66, 178, 22], [724, 130, 28], [728, 142, 60], [708, 328, 60], [820, 313, 60], [774, 482, 28], [780, 493, 62], [1354, 260, 30]],
    wires: [
      [88, 178, 110, 187], [132, 187, 190, 207], [132, 187, 162, 155], [212, 207, 240, 167], [212, 207, 396, 209], [212, 207, 396, 242], [212, 203, 390, 174], [388, 143, 442, 135], [415, 136, 490, 103], [413, 170, 484, 166], [464, 135, 550, 72], [512, 103, 700, 107], [505, 166, 657, 223], [505, 166, 620, 243], [418, 209, 526, 310], [414, 242, 470, 330],
      [97, 332, 140, 360], [114, 355, 140, 366], [120, 373, 140, 370], [162, 366, 210, 364], [165, 290, 210, 364], [255, 331, 270, 332], [290, 332, 326, 320], [235, 364, 246, 415],
      [235, 367, 400, 299], [235, 367, 400, 328], [235, 367, 400, 356], [235, 367, 400, 390], [235, 367, 628, 128], [235, 367, 628, 134], [235, 367, 657, 218], [235, 367, 617, 265], [235, 367, 652, 424], [235, 367, 1154, 437], [235, 367, 506, 382], [235, 370, 720, 466], [235, 367, 589, 534], [235, 367, 630, 80], [350, 400, 600, 600], [420, 299, 700, 107], [420, 299, 657, 223], [420, 328, 793, 243], [420, 356, 793, 290], [420, 390, 652, 430], [420, 390, 550, 600],
      [346, 315, 375, 370], [455, 355, 570, 410], [570, 410, 552, 600], [594, 333, 652, 430], [528, 382, 620, 400], [546, 310, 574, 333], [420, 390, 720, 452], [610, 534, 660, 600], [635, 72, 737, 55], [650, 134, 737, 60], [650, 128, 730, 55], [678, 223, 793, 243], [678, 220, 793, 290], [678, 220, 928, 228], [678, 223, 860, 90], [650, 140, 740, 220], [610, 148, 657, 220],
      [758, 60, 786, 76], [720, 107, 802, 107], [806, 76, 850, 88], [822, 107, 850, 90], [788, 142, 850, 95], [870, 88, 1128, 66], [974, 74, 1128, 62], [974, 78, 1128, 66], [1149, 63, 1244, 33], [1149, 63, 1241, 69], [1149, 67, 1386, 150], [1265, 33, 1386, 210], [1262, 69, 1386, 215],
      [814, 243, 880, 259], [814, 290, 896, 289], [900, 259, 944, 268], [916, 289, 944, 275], [880, 313, 896, 289], [768, 328, 896, 289], [991, 231, 1134, 231], [991, 235, 1386, 228], [965, 271, 1134, 236], [1155, 233, 1245, 199], [1266, 199, 1386, 228],
      [673, 430, 748, 431], [673, 430, 716, 466], [736, 466, 833, 428], [768, 431, 833, 428], [853, 428, 899, 438], [869, 458, 899, 440], [842, 493, 850, 460], [920, 438, 1154, 440], [1021, 433, 1154, 445], [620, 393, 957, 425], [1175, 440, 1238, 418], [1259, 418, 1386, 330], [1175, 440, 1386, 260], [720, 466, 1154, 563], [1175, 568, 1249, 563], [1270, 563, 1386, 400], [958, 578, 1154, 568], [1386, 280, 1360, 350], [1352, 300, 1370, 560],
    ],
  },
];

const gap: P[] = [[228, 215], [215, 238], [240, 262], [245, 292], [265, 305], [312, 300], [308, 250], [298, 215], [262, 210]];
const lilac = "#b8a9e4";

const ClusterArt = ({ c }: { c: Cluster }) => (
  <g transform={`translate(${c.x} ${c.y})`}>
    {c.blobs.map((b, i) => <path key={i} d={smooth(b)} fill={lilac} />)}
    {c.discs.map(([x, y, r], i) => <circle key={i} cx={x} cy={y} r={r} fill={lilac} />)}
    {c.x === 0 && <path d={smooth(gap)} fill="#d1cdc8" />}
    <g fill="none" stroke="#55514f" strokeWidth="2" opacity="0.75">
      {c.wires.map((w, i) => <path key={i} d={wire(w)} />)}
    </g>
    {c.sliders.map(([x, y, w], i) => (
      <g key={i}>
        <rect x={x} y={y - 3} width={w} height="7" rx="2" fill="#c2bfc9" stroke="#8e8a98" />
        <rect x={x} y={y - 4} width={Math.min(w, 16)} height="8" rx="2" fill="#77737d" />
      </g>
    ))}
    {c.notes.map(([x, y, w, h], i) => (
      <rect key={i} x={x} y={y} width={w} height={h} fill="#fbf55c" stroke="#a39b55" strokeWidth="2" />
    ))}
    {c.nodes.map(([x, y, h], i) => (
      <g key={i}>
        <rect x={x - 12} y={y - h / 2 - 2} width="24" height={h + 4} rx="3" fill="#b9b7bd" stroke="#77747c" />
        <rect x={x - 6} y={y - h / 2 - 1} width="11" height={h + 2} fill="#161616" />
      </g>
    ))}
  </g>
);

const Graph = () => (
  <svg width="100%" height="100%" role="img" aria-label="Node graph">
    <path d="M57 0v460" stroke="#b9b5b2" strokeDasharray="1 1" />
    <g transform="scale(0.333333)">
      {clusters.map((c, i) => <ClusterArt key={i} c={c} />)}
      <path d="M516 567h20v18h-20z" fill="#e98915" stroke="#9d5500" />
      <path d="M522 569h8v14h-8z" fill="#222" />
      <path d="M796 298h21v34h-21z" fill="#71c837" stroke="#356c14" strokeWidth="2" />
      <path d="M802 303h10v20h-10z" fill="#161616" />
      <path d="m797 313 18 16-8 1 4 9-6 1-4-8-5 4z" fill="#111" stroke="#fff" />
      <path d="M0 1330h9v44H0z" fill="#7c7a79" />
      <path d="M2 1334h4v36H2z" fill="#c5c2c0" />
    </g>
  </svg>
);

const menus = ["Params", "Maths", "Sets", "Vector", "Curve", "Surface", "Mesh", "Intersect", "Transform", "Display"];

const Grasshopper = () => (
  <GrasshopperWindow>
    <TitleBar $active>
      <Lights $active><i /><i /><i /></Lights>
      <WindowTitle>Grasshopper - ExperimentDiagrams</WindowTitle>
    </TitleBar>
    <Menu>
      {menus.map((m, i) => <MenuTab key={m} $active={i === 0}>{m}</MenuTab>)}
    </Menu>
    <Ribbon>
      {ribbon.map((g) => (
        <RibbonGroup key={g.title} $grow={g.grow}>
          <RibbonIcons>
            {g.items.map((it) => (
              <RibbonButton key={it.name} aria-label={it.name} $apart={it.apart}>{it.art}</RibbonButton>
            ))}
          </RibbonIcons>
          <RibbonTitle><span /><span>{g.title}</span><span>+</span></RibbonTitle>
        </RibbonGroup>
      ))}
    </Ribbon>
    <CanvasBar>
      <BarButton aria-label="Open"><Glyph size={9}><path d="M2 6h12v9H2z" fill="#48b335" stroke="#287b1d" /><path d="M5 6V2h5v4" fill="none" stroke="#287b1d" strokeWidth="2" /></Glyph></BarButton>
      <BarButton aria-label="Save"><Glyph size={9}><path d="M1 1h14v14H1z" fill="#2a5dbd" /><path d="M4 1h8v5H4z" fill="#fff" /><path d="M4 10h8v5H4z" fill="#c9d9f4" /></Glyph></BarButton>
      <ZoomField>
        <ZoomSelect aria-label="Zoom" defaultValue="23%"><option>23%</option><option>100%</option></ZoomSelect>
        <svg width="5" height="4" viewBox="0 0 5 4"><path d="m1 1 1.500 2L4 1" fill="none" stroke="#fff" /></svg>
      </ZoomField>
      <BarButton aria-label="Zoom extents"><Glyph size={9}><path d="M1 5V1h4M11 1h4v4M15 11v4h-4M5 15H1v-4" fill="none" stroke="#111" strokeWidth="3" /><circle cx="8" cy="8" r="3" /></Glyph></BarButton>
      <BarButton aria-label="Named views"><Glyph size={9}><path d="M0 8q8-9 16 0-8 8-16 0z" fill="#cfe3f2" stroke="#444" strokeWidth="2" /><circle cx="8" cy="8" r="3" fill="#235a9a" /></Glyph></BarButton>
      <BarButton aria-label="Sketch"><Glyph size={9}><path d="m1 12 9-10 5 3-6 9-7 1z" fill="#c8271d" /><path d="m1 12 5-5 4 4-2 4H2z" fill="#bbb" /></Glyph></BarButton>
      <Spacer />
      <BarButton aria-label="No preview"><Glyph size={9}><circle cx="8" cy="10" r="5" fill="#333" /><path d="M5 3h6v5H5z" fill="#ccc" stroke="#888" /></Glyph></BarButton>
      <BarButton aria-label="Wire preview"><Glyph size={9}><path d="m2 9 6-7 6 4-6 8z" fill="#fff" stroke="#555" strokeWidth="2" /><path d="m4 6 7 5" stroke="#555" /></Glyph></BarButton>
      <BarButton aria-label="Shaded preview" $pressed><Glyph size={9}><path d="M2 9 6 2l8 1-1 8-7 4z" fill="#cf1c1c" stroke="#690d0d" strokeWidth="2" /></Glyph></BarButton>
      <BarButton aria-label="Selected preview" $pressed><Glyph size={9}><path d="M1 8 7 1l7 4-3 6z" fill="#3aa338" stroke="#185c16" /><path d="M8 8h6v7z" fill="#eee" /></Glyph></BarButton>
      <BarButton aria-label="Document preview"><Glyph size={9}><circle cx="8" cy="8" r="6" fill="#f2a154" stroke="#8a4a12" /><path d="M8 2a6 6 0 0 0 0 12z" fill="#eee" /></Glyph></BarButton>
      <BarButton aria-label="Mesh quality"><Glyph size={9}><circle cx="8" cy="8" r="6" fill="#2c6fd1" stroke="#174087" /><circle cx="6" cy="6" r="2" fill="#b9d8ff" /></Glyph></BarButton>
    </CanvasBar>
    <Canvas>
      <Graph />
      <Compass width="27" height="31" viewBox="0 0 27 31">
        <circle cx="14" cy="16" r="11" fill="#dedbd8" stroke="#8b8886" />
        <circle cx="14" cy="16" r="8" fill="#a3a19f" stroke="#fff" />
        <path d="m7 9 14 14M21 9 7 23" stroke="#d9d7d5" strokeWidth="1" />
        <circle cx="14" cy="16" r="4" fill="#c4c2c0" />
        <path d="M6 24A11 11 0 0 1 20 6" fill="none" stroke="#111" strokeWidth="2" />
        <path d="m7 1 5 3-4 3z" fill="#111" />
      </Compass>
    </Canvas>
  </GrasshopperWindow>
);

export default function App() {
  return (
    <>
      <GlobalStyle />
      <Desktop>
        <Rhino />
        <Grasshopper />
      </Desktop>
    </>
  );
}
